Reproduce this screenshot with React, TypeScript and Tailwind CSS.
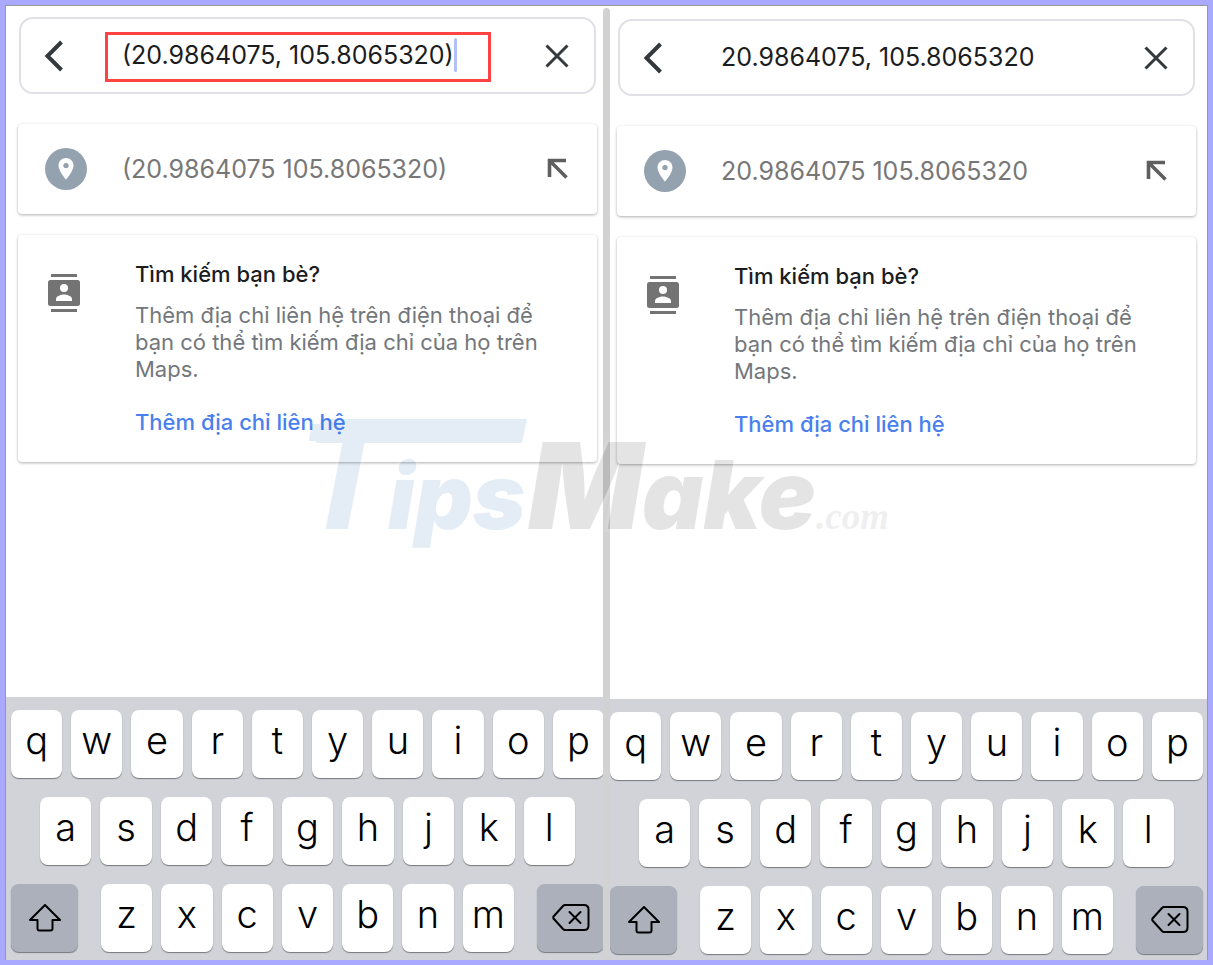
import React, { useState } from 'react';

interface PhonePaneProps {
  initialQuery: string;
  suggestion: string;
  highlighted?: boolean;
  contentClass: string;
  keyboardClass: string;
}

const BackIcon = () => (
  <svg className="w-5 h-8" viewBox="0 0 20 32" fill="none" stroke="#33393c" strokeWidth="4">
    <path d="M17.5 2 L3.5 16 L17.5 30" />
  </svg>
);

const CloseIcon = () => (
  <svg className="size-6" viewBox="0 0 24 24" fill="none" stroke="#33393c" strokeWidth="3">
    <path d="M1.5 1.5 L22.5 22.5 M22.5 1.5 L1.5 22.5" />
  </svg>
);

const PlaceIcon = () => (
  <svg className="size-[42px] shrink-0" viewBox="0 0 42 42">
    <circle cx="21" cy="21" r="21" fill="#93a2ae" />
    <path
      fill="#fff"
      fillRule="evenodd"
      d="M21 10c-4.2 0-7.5 3.3-7.5 7.4C13.5 23 21 31.5 21 31.5s7.5-8.5 7.5-14.1C28.5 13.3 25.2 10 21 10zm0 10.3a2.7 2.7 0 1 1 0-5.4 2.7 2.7 0 0 1 0 5.4z"
    />
  </svg>
);

const FillQueryIcon = () => (
  <svg className="size-[22px]" viewBox="0 0 22 22" fill="none" stroke="#5f5f5f" strokeWidth="3.6">
    <path d="M19 2.5 H2.5 V19 M2.5 2.5 L19.5 19.5" />
  </svg>
);

const ContactsIcon = () => (
  <svg className="w-[33px] h-10 shrink-0" viewBox="0 0 33 40" fill="#737373">
    <path d="M4 1h26v3H4zM4 36h26v3H4z" />
    <rect x="1" y="7" width="32" height="26" rx="2.5" />
    <circle cx="17" cy="15" r="4" fill="#fff" />
    <path fill="#fff" d="M9 28v-2c0-3 5-4.5 8-4.5s8 1.5 8 4.5v2z" />
  </svg>
);

const ShiftIcon = () => (
  <svg className="w-8 h-7" viewBox="0 0 32 28" fill="none" stroke="#000" strokeWidth="2" strokeLinejoin="round">
    <path d="M16 1 L31 16 H23.5 V24.5 Q23.5 26.5 21.5 26.5 H10.5 Q8.5 26.5 8.5 24.5 V16 H1 Z" />
  </svg>
);

const DeleteIcon = () => (
  <svg className="w-[38px] h-7" viewBox="0 0 38 28" fill="none" stroke="#000" strokeWidth="2" strokeLinejoin="round">
    <path d="M13 1 H32 Q36.5 1 36.5 5.5 V21.5 Q36.5 26 32 26 H13 Q12 26 11 25 L1.5 14.5 Q1 13.5 1.5 12.5 L11 2 Q12 1 13 1 Z" />
    <path d="M17.5 8 L28.5 19 M28.5 8 L17.5 19" strokeLinecap="round" />
  </svg>
);

const Key = ({ letter }: { letter: string }) => (
  <button
    type="button"
    className="flex-1 min-w-0 h-[68px] pb-2 flex items-center justify-center rounded-lg bg-white text-[38px] leading-none font-light text-black shadow-[0_1px_1px_#75777b]"
  >
    {letter}
  </button>
);

const sideKey =
  'w-[67px] shrink-0 h-[68px] flex items-center justify-center rounded-lg bg-[#abb0ba] shadow-[0_1px_1px_#75777b]';

const Keyboard = ({ className }: { className: string }) => (
  <div className={`mt-auto flex flex-col gap-[19px] pt-[13px] bg-[#d1d3d9] ${className}`}>
    <div className="flex gap-[9px]">
      {'qwertyuiop'.split('').map((l) => <Key key={l} letter={l} />)}
    </div>
    <div className="flex gap-[9px] px-[29px]">
      {'asdfghjkl'.split('').map((l) => <Key key={l} letter={l} />)}
    </div>
    <div className="flex gap-[23px]">
      <button type="button" aria-label="Shift" className={sideKey}>
        <ShiftIcon />
      </button>
      <div className="flex flex-1 gap-[9px]">
        {'zxcvbnm'.split('').map((l) => <Key key={l} letter={l} />)}
      </div>
      <button type="button" aria-label="Delete" className={sideKey}>
        <DeleteIcon />
      </button>
    </div>
  </div>
);

const cardClass = 'rounded-sm bg-white shadow-[0_1px_3px_rgba(0,0,0,0.32)]';

const PhonePane: React.FC<PhonePaneProps> = ({
  initialQuery,
  suggestion,
  highlighted = false,
  contentClass,
  keyboardClass,
}) => {
  const [query, setQuery] = useState<string>(initialQuery);

  return (
    <section className="flex-1 min-w-0 flex flex-col overflow-hidden">
      <div className={`flex flex-col ${contentClass}`}>
        <div className="mx-px h-[77px] pl-[23px] pr-[25px] flex items-center border-2 border-[#e0e0e6] rounded-[14px]">
          <button type="button" aria-label="Back">
            <BackIcon />
          </button>
          <div
            className={`ml-[41px] mr-[54px] mt-[3px] flex-1 min-w-0 h-[50px] pl-[14px] pb-1 flex items-center border-[3px] ${
              highlighted ? 'border-[#ff4343]' : 'border-transparent'
            }`}
          >
            <input
              type="text"
              aria-label="Search"
              className="field-sizing-content h-9 text-[25px] leading-9 text-[#1b1c1e] outline-none"
              value={query}
              onChange={(e) => setQuery(e.target.value)}
            />
            {highlighted && <span className="w-[3px] h-[34px] rounded-sm bg-[#b3c0f7]" />}
          </div>
          <button type="button" aria-label="Clear" onClick={() => setQuery('')}>
            <CloseIcon />
          </button>
        </div>

        <div className={`mt-[30px] h-[90px] pl-[27px] pr-7 flex items-center ${cardClass}`}>
          <PlaceIcon />
          <span className="ml-[35px] flex-1 text-[25px] leading-8 text-[#777]">{suggestion}</span>
          <button type="button" aria-label="Use suggestion" onClick={() => setQuery(suggestion)}>
            <FillQueryIcon />
          </button>
        </div>

        <div className={`mt-[21px] pl-[29px] pr-12 py-[26px] flex items-start ${cardClass}`}>
          <div className="pt-3">
            <ContactsIcon />
          </div>
          <div className="ml-[55px] text-[22px] leading-[27px]">
            <h2 className="font-medium text-[#1b1c1e]">Tìm kiếm bạn bè?</h2>
            <p className="mt-[14px] text-[#73777b]">
              Thêm địa chỉ liên hệ trên điện thoại để
              <br />
              bạn có thể tìm kiếm địa chỉ của họ trên
              <br />
              Maps.
            </p>
            <a href="#" className="mt-[26px] block font-medium text-[#4a80ee]">Thêm địa chỉ liên hệ</a>
          </div>
        </div>
      </div>
      <Keyboard className={keyboardClass} />
    </section>
  );
};

const Watermark = () => (
  <svg
    className="absolute top-[374px] left-1/2 -translate-x-1/2 w-[650px] h-[220px] pointer-events-none font-black italic"
    viewBox="282 380 650 220"
    aria-hidden="true"
  >
    <g opacity="0.1" stroke="#fff" strokeWidth="6" paintOrder="stroke">
      <g fill="#0055af">
        <text x="298" y="529" fontSize="153" fontFamily="Liberation Sans, sans-serif">T</text>
        <path d="M321 419 H527 L522 443 H316 Z" stroke="none" />
        <text x="388" y="529" fontSize="90">ips</text>
      </g>
      <g fill="#000">
        <text x="528" y="529" fontSize="120">M</text>
        <text x="642" y="529" fontSize="95">ake</text>
      </g>
    </g>
    <text x="816" y="529" fontSize="37" fontFamily="Liberation Serif, serif" fontWeight="700" opacity="0.06">
      .com
    </text>
  </svg>
);

const App: React.FC = () => {
  return (
    <div className="min-h-screen flex p-[5px] bg-[#a9a9ff] font-['Inter','Liberation_Sans',sans-serif]">
      <main className="relative flex-1 flex border border-b-0 border-[#98989f] bg-white">
        <PhonePane
          initialQuery="(20.9864075, 105.8065320)"
          suggestion="(20.9864075 105.8065320)"
          highlighted
          contentClass="pt-[11px] pl-3 pr-1.5"
          keyboardClass="-mr-px pl-[5px] pb-2"
        />
        <div className="w-[7px] mt-0.5 shrink-0 rounded-t-full bg-[#d2d2d2]" />
        <PhonePane
          initialQuery="20.9864075, 105.8065320"
          suggestion="20.9864075 105.8065320"
          contentClass="pt-[13px] pl-[7px] pr-[11px]"
          keyboardClass="pr-1 pb-1.5"
        />
        <Watermark />
      </main>
    </div>
  );
};

export default App;
